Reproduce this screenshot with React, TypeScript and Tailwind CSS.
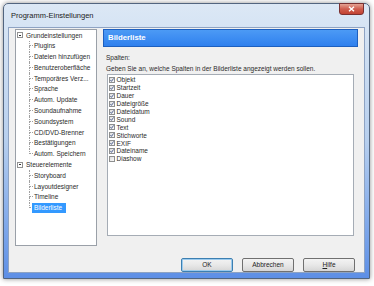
import React from "react";

interface TreeNode {
  label: string;
  children?: string[];
}

const TREE: TreeNode[] = [
  {
    label: "Grundeinstellungen",
    children: [
      "Plugins",
      "Dateien hinzufügen",
      "Benutzeroberfläche",
      "Temporäres Verz...",
      "Sprache",
      "Autom. Update",
      "Soundaufnahme",
      "Soundsystem",
      "CD/DVD-Brenner",
      "Bestätigungen",
      "Autom. Speichern",
    ],
  },
  { label: "Steuerelemente", children: ["Storyboard", "Layoutdesigner", "Timeline", "Bilderliste"] },
];

const COLUMNS: { name: string; on: boolean }[] = [
  { name: "Objekt", on: true },
  { name: "Startzeit", on: true },
  { name: "Dauer", on: true },
  { name: "Dateigröße", on: true },
  { name: "Dateidatum", on: true },
  { name: "Sound", on: true },
  { name: "Text", on: true },
  { name: "Stichworte", on: true },
  { name: "EXIF", on: true },
  { name: "Dateiname", on: true },
  { name: "Diashow", on: false },
];

const SELECTED = "Bilderliste";

function MinusBox() {
  return (
    <span className="w-[6px] h-[6px] border border-[#919191] bg-white flex items-center justify-center shrink-0">
      <span className="w-[2px] h-px bg-[#333]" />
    </span>
  );
}

function Check({ on }: { on: boolean }) {
  return (
    <span className="w-[6px] h-[6px] border border-[#8e8f8f] bg-gradient-to-br from-[#dcdcdc] to-[#fbfbfb] shrink-0 flex items-center justify-center">
      {on && (
        <svg width="4" height="4" viewBox="0 0 4 4" className="block">
          <path d="M0.4 2 L1.5 3.4 L3.6 0.4" stroke="#4a5c8c" strokeWidth="0.9" fill="none" />
        </svg>
      )}
    </span>
  );
}

function Btn({ children, primary }: { children: React.ReactNode; primary?: boolean }) {
  return (
    <button
      className={`w-[52px] h-[14px] rounded-[2px] border text-[6.5px] text-[#222] bg-gradient-to-b from-[#f3f3f3] via-[#e8e8e8] to-[#d6d6d6] flex items-center justify-center ${
        primary ? "border-[#3c7fb1] shadow-[inset_0_0_0_1px_#9ccbee]" : "border-[#707070]"
      }`}
    >
      {children}
    </button>
  );
}

export default function App() {
  return (
    <div className="w-[374px] h-[286px] bg-white pt-[3px] pl-[3px] font-['Liberation_Sans',Arial,sans-serif]">
      <div className="w-[367px] h-[276px] flex flex-col rounded-t-[5px] border border-[#52657f] bg-gradient-to-b from-[#dce8f5] via-[#b7cfee] to-[#5d8fe6] shadow-[0_0_5px_rgba(0,0,0,0.45)] px-[4px] pb-[5px]">
        {/* title bar */}
        <div className="h-[23px] flex items-start justify-between">
          <span className="text-[7.5px] text-[#1b1b1b] pl-[3px] mt-[6px]">Programm-Einstellungen</span>
          <span className="w-[25px] h-[12px] mr-[1px] -mt-px rounded-b-[3px] border border-[#7a3030] bg-gradient-to-b from-[#e4a394] via-[#cf5d4e] to-[#c24232] flex items-center justify-center">
            <svg width="7" height="6" viewBox="0 0 7 6">
              <path d="M1 0.8 L6 5.2 M6 0.8 L1 5.2" stroke="white" strokeWidth="1.4" />
            </svg>
          </span>
        </div>

        {/* client area */}
        <div className="flex-1 flex flex-col bg-[#f0f0f0] border border-[#8ea3c3]">
          <div className="flex pl-[6px] pr-[6px] pt-px gap-[6px]">
            {/* tree */}
            <div className="w-[82px] h-[217px] border border-[#9aa0a8] bg-white text-[6.5px] text-[#2a2a2a]">
              {TREE.map((node) => (
                <div key={node.label}>
                  <div className="h-[10.8px] flex items-center pl-[1px] gap-[3px]">
                    <MinusBox />
                    <span>{node.label}</span>
                  </div>
                  {node.children?.map((c, i) => {
                    const last = i === node.children!.length - 1;
                    return (
                      <div key={c} className="h-[10.8px] flex items-stretch pl-[13px]">
                        <div className="w-[4px] flex flex-col shrink-0">
                          <div className="h-1/2 border-l border-b border-dotted border-[#a0a0a0]" />
                          <div className={`flex-1 ${last ? "" : "border-l border-dotted border-[#a0a0a0]"}`} />
                        </div>
                        <div className="flex items-center pl-[1px]">
                          {c === SELECTED ? (
                            <span className="leading-[10px] bg-[#3399ff] text-white pl-[2px] pr-[4px] -ml-[2px]">{c}</span>
                          ) : (
                            <span className="leading-[10px]">{c}</span>
                          )}
                        </div>
                      </div>
                    );
                  })}
                </div>
              ))}
            </div>

            {/* right panel */}
            <div className="flex-1 flex flex-col">
              <div className="h-[18px] border border-[#1d5fbf] bg-gradient-to-b from-[#4c9af5] to-[#2f80ee] flex items-center pl-[4px]">
                <span className="text-[7.8px] font-bold text-white">Bilderliste</span>
              </div>
              <div className="pl-[3px] pr-[4px] text-[6.5px] text-[#2a2a2a]">
                <div className="h-[11px] mt-[5px] flex items-center">Spalten:</div>
                <div className="h-[11px] flex items-center">
                  Geben Sie an, welche Spalten in der Bilderliste angezeigt werden sollen.
                </div>
                <div className="h-[162px] ml-px border border-[#a5acb5] bg-white pt-[1px] pl-px">
                  {COLUMNS.map((c) => (
                    <div key={c.name} className="h-[7.9px] flex items-center gap-[1.5px]">
                      <Check on={c.on} />
                      <span className="leading-[7px]">{c.name}</span>
                    </div>
                  ))}
                </div>
              </div>
            </div>
          </div>

          {/* buttons */}
          <div className="flex-1 flex justify-end items-start pt-[11px] pr-[9px] gap-[9px] mt-[1px]">
            <Btn primary>OK</Btn>
            <Btn>Abbrechen</Btn>
            <Btn>
              <span>
                <span className="underline">H</span>ilfe
              </span>
            </Btn>
          </div>
        </div>
      </div>
    </div>
  );
}
